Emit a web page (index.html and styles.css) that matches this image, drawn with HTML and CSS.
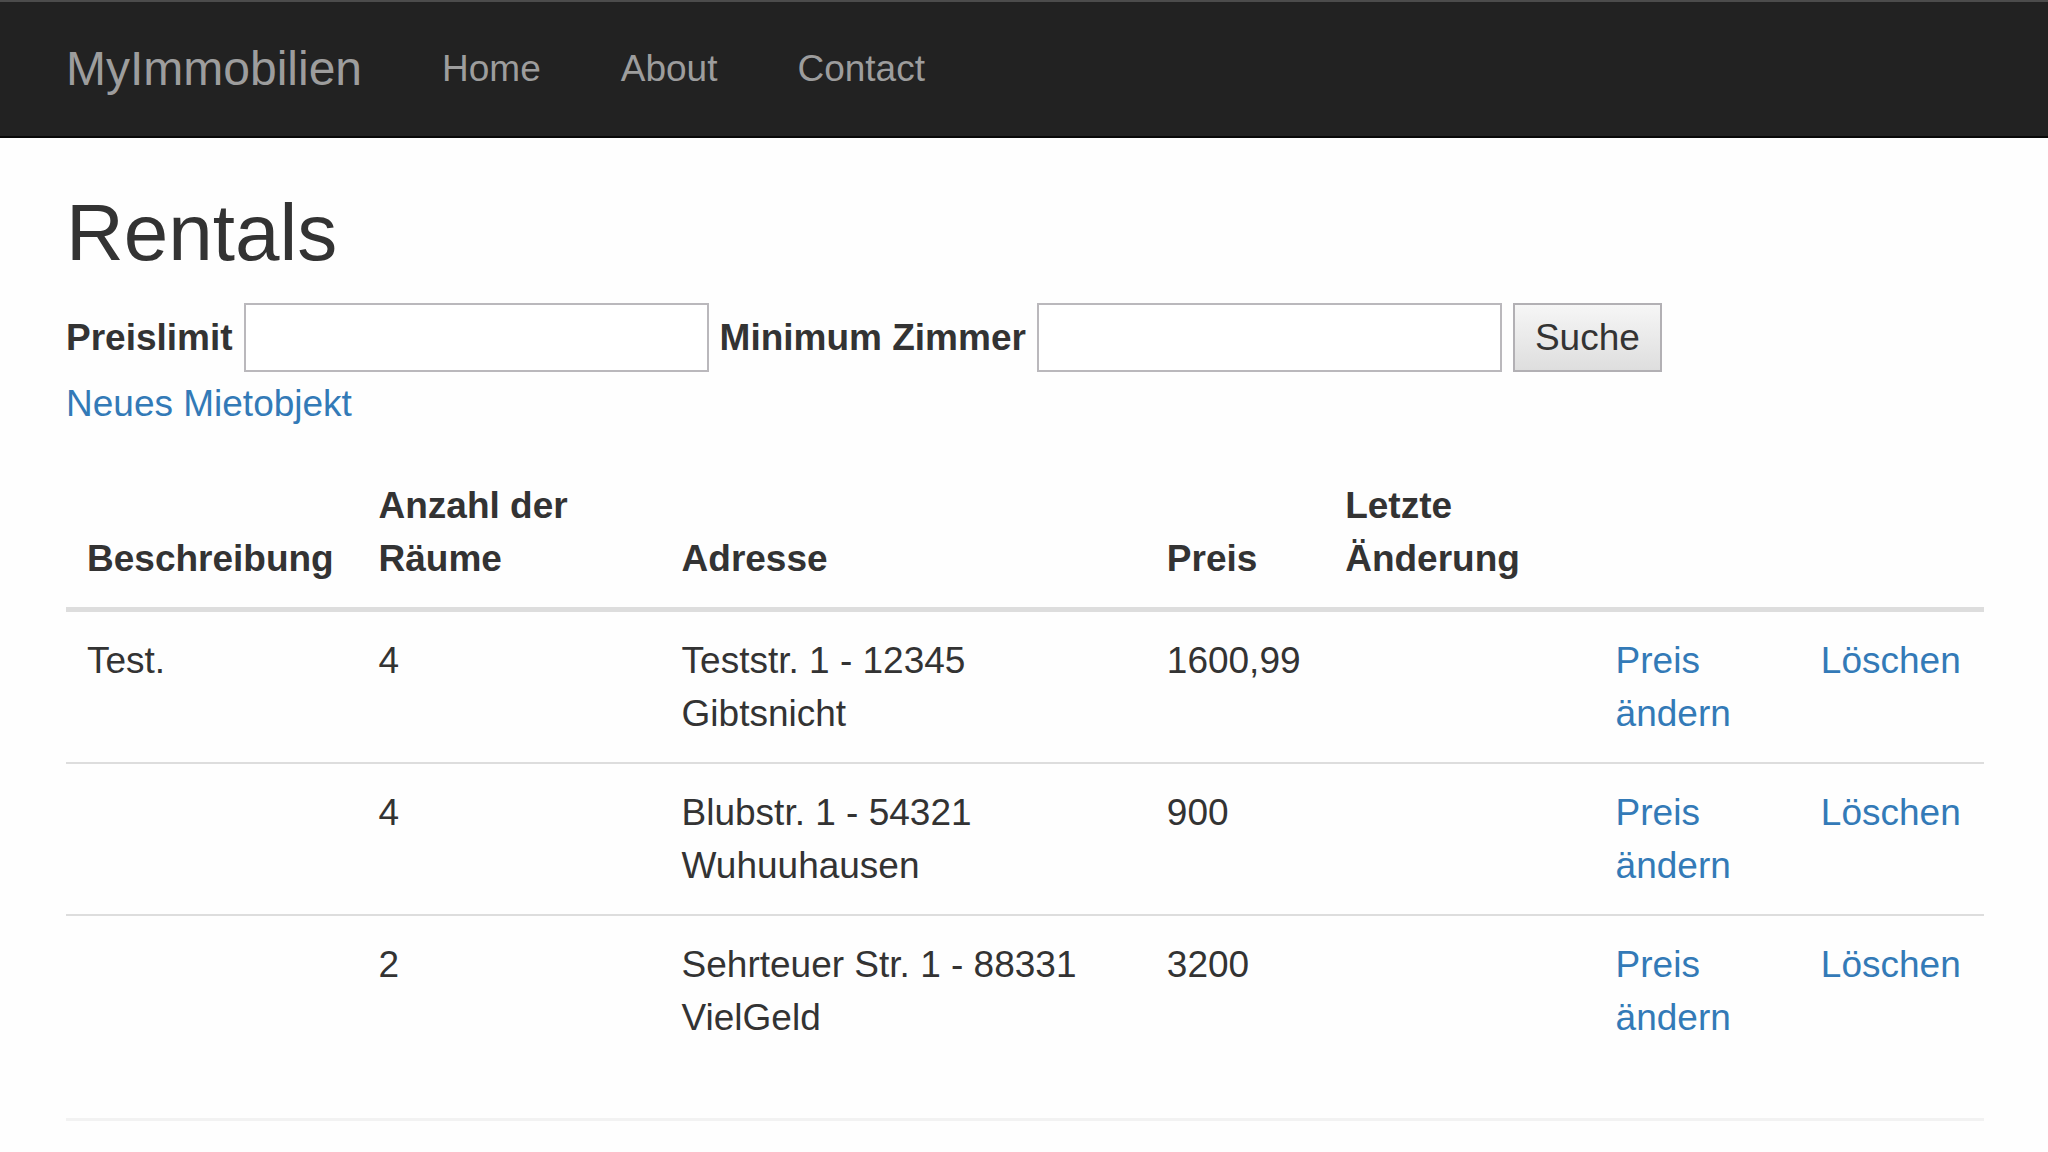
FILE: index.html
```html
<!DOCTYPE html>
<html lang="de">
<head>
<meta charset="utf-8">
<meta name="viewport" content="width=device-width, initial-scale=1">
<title>Rentals - MyImmobilien</title>
<link rel="stylesheet" href="styles.css">
</head>
<body>
<nav class="navbar">
  <a class="navbar-brand" href="#">MyImmobilien</a>
  <ul class="nav-list">
    <li><a class="nav-link" href="#">Home</a></li>
    <li><a class="nav-link" href="#">About</a></li>
    <li><a class="nav-link" href="#">Contact</a></li>
  </ul>
</nav>
<main class="content">
  <h1 class="title">Rentals</h1>
  <form class="search">
    <label for="limit">Preislimit</label>
    <input class="field" id="limit" type="text">
    <label for="rooms">Minimum Zimmer</label>
    <input class="field" id="rooms" type="text">
    <button class="submit" type="submit">Suche</button>
  </form>
  <a class="link" href="#">Neues Mietobjekt</a>
  <table class="table">
    <colgroup>
      <col class="col-desc"><col class="col-rooms"><col class="col-address"><col class="col-price"><col class="col-changed"><col class="col-edit"><col class="col-delete">
    </colgroup>
    <thead>
      <tr><th>Beschreibung</th><th>Anzahl der<br>Räume</th><th>Adresse</th><th>Preis</th><th>Letzte<br>Änderung</th><th></th><th></th></tr>
    </thead>
    <tbody>
      <tr><td>Test.</td><td>4</td><td>Teststr. 1 - 12345<br>Gibtsnicht</td><td>1600,99</td><td></td><td><a class="link" href="#">Preis<br>ändern</a></td><td><a class="link" href="#">Löschen</a></td></tr>
      <tr><td></td><td>4</td><td>Blubstr. 1 - 54321<br>Wuhuuhausen</td><td>900</td><td></td><td><a class="link" href="#">Preis<br>ändern</a></td><td><a class="link" href="#">Löschen</a></td></tr>
      <tr><td></td><td>2</td><td>Sehrteuer Str. 1 - 88331<br>VielGeld</td><td>3200</td><td></td><td><a class="link" href="#">Preis<br>ändern</a></td><td><a class="link" href="#">Löschen</a></td></tr>
    </tbody>
  </table>
  <hr class="rule">
</main>
</body>
</html>
```
FILE: styles.css
```css
* {
  box-sizing: border-box;
}

body {
  margin: 0;
  background: #fefefe;
  color: #333;
  font-family: "Liberation Sans", Arial, sans-serif;
  font-size: 37px;
  line-height: 53px;
}

.navbar {
  display: flex;
  align-items: center;
  gap: 40px;
  padding: 40px 66px 41px;
  border-top: 2px solid #4c4c4c;
  border-bottom: 2px solid #080808;
  background: #222;
}

.navbar a {
  color: #9d9d9d;
  text-decoration: none;
}

.navbar-brand {
  font-size: 48px;
}

.nav-list {
  display: flex;
  margin: 0;
  padding: 0;
  list-style: none;
}

.nav-link {
  padding: 0 40px;
}

.content {
  padding: 51px 64px 30px 66px;
}

.title {
  margin: 0 0 26px;
  font-size: 80px;
  font-weight: 500;
  line-height: 88px;
}

.search {
  display: flex;
  align-items: center;
  gap: 11px;
  margin-bottom: 5px;
  font-weight: bold;
}

.field {
  width: 465px;
  height: 69px;
  padding: 4px;
  border: 2px solid #bab8bc;
  background: #fff;
  font: inherit;
  font-weight: normal;
}

.submit {
  height: 69px;
  padding: 0 20px;
  border: 2px solid #b2b0b4;
  background: linear-gradient(#f6f6f6, #dedede);
  color: #333;
  font: inherit;
  font-weight: normal;
}

.link {
  color: #337ab7;
  text-decoration: none;
}

.table {
  width: 100%;
  margin: 27px 0 52px;
  border-collapse: collapse;
  table-layout: fixed;
}

.table th,
.table td {
  padding: 22px 21px;
  text-align: left;
  vertical-align: top;
  white-space: nowrap;
}

.table th {
  vertical-align: bottom;
  border-bottom: 5px solid #ddd;
}

.table td {
  border-top: 2px solid #ddd;
}

.col-desc { width: 15.2%; }
.col-rooms { width: 15.8%; }
.col-address { width: 25.3%; }
.col-price { width: 9.3%; }
.col-changed { width: 14.1%; }
.col-edit { width: 10.7%; }
.col-delete { width: 9.6%; }

.rule {
  margin: 0;
  border: 0;
  border-top: 3px solid #f2f2f2;
}
```
